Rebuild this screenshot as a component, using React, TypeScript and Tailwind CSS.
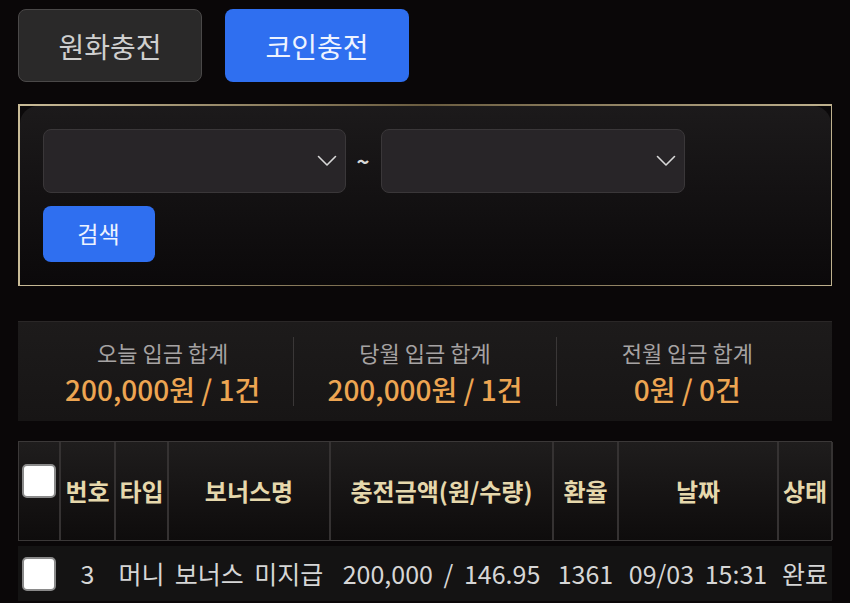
import React from 'react';

const FONT = { fontFamily: '"Noto Sans CJK KR", "Noto Sans", sans-serif' };

const Chevron: React.FC = () => (
  <svg width="20" height="12" viewBox="0 0 20 12" fill="none">
    <path d="M1.5 1.5L10 10L18.5 1.5" stroke="#d8d8d8" strokeWidth="1.6" strokeLinecap="round" strokeLinejoin="round" />
  </svg>
);

const Checkbox: React.FC = () => (
  <div className="h-[34px] w-[34px] rounded-[5px] border-2 border-[#8a8a8a] bg-white" />
);

const stats = [
  { label: '오늘 입금 합계', value: '200,000원 / 1건' },
  { label: '당월 입금 합계', value: '200,000원 / 1건' },
  { label: '전월 입금 합계', value: '0원 / 0건' },
];

const headers = ['번호', '타입', '보너스명', '충전금액(원/수량)', '환율', '날짜', '상태'];
const row = ['3', '머니', '보너스 미지급', '200,000 / 146.95', '1361', '09/03 15:31', '완료'];

const cols = 'grid grid-cols-[42px_55px_53px_162px_223px_65px_160px_54px]';

const App: React.FC = () => {
  return (
    <div className="h-[603px] w-[850px] overflow-hidden bg-[#0a0708]" style={FONT}>
      <div className="pl-[18px] pr-[18px] pt-[9px]">
        {/* tabs */}
        <div className="flex gap-[23px]">
          <button className="h-[73px] w-[184px] rounded-lg border border-[#4a4848] bg-[#2a2929] text-[28px] text-[#cfcfcf]">
            원화충전
          </button>
          <button className="h-[73px] w-[184px] rounded-lg bg-[#2f6ff0] text-[28px] text-[#eef3ff]">
            코인충전
          </button>
        </div>

        {/* search panel */}
        <div className="mt-[22px] bg-gradient-to-r from-[#c9bb97] via-[#6a5c40] to-[#bfb18e] p-[1.5px]">
          <div className="bg-[#0b090a]">
            <div className="rounded-t-[18px] bg-gradient-to-b from-[#1c1a1b] to-[#0b090a] px-[23px] pt-[23px] pb-[23px]">
              <div className="flex items-center">
                <div className="flex h-[64px] w-[303px] items-center justify-end rounded-lg border border-[#3a3739] bg-[#282528] pr-[8px]">
                  <Chevron />
                </div>
                <span className="w-[35px] text-center text-[22px] font-bold text-[#d8d8d8]">~</span>
                <div className="flex h-[64px] w-[304px] items-center justify-end rounded-lg border border-[#3a3739] bg-[#282528] pr-[8px]">
                  <Chevron />
                </div>
              </div>
              <button className="mt-[13px] h-[56px] w-[112px] rounded-lg bg-[#2f6ff0] text-[23px] text-[#eef3ff]">
                검색
              </button>
            </div>
          </div>
        </div>

        {/* stats */}
        <div className="mt-[35px] flex h-[100px] items-center border-t border-[#2a2727] bg-gradient-to-b from-[#1d1b1b] to-[#171515] px-[14px]">
          {stats.map((s, i) => (
            <div
              key={s.label}
              className={`flex flex-1 flex-col items-center justify-center ${i > 0 ? 'border-l border-[#3a3737]' : ''}`}
            >
              <span className="text-[22px] leading-[30px] text-[#a6a3a3]">{s.label}</span>
              <span className="mt-[5px] text-[28px] leading-[34px] font-medium text-[#eda552]">{s.value}</span>
            </div>
          ))}
        </div>

        {/* table */}
        <div className="mt-[20px]">
          <div className={`${cols} h-[100px] border-y border-l border-[#3b3838] bg-gradient-to-b from-[#1f1d1d] to-[#0e0c0c]`}>
            <div className="flex justify-center border-r-2 border-[#353232] pt-[22px]">
              <Checkbox />
            </div>
            {headers.map((h) => (
              <div
                key={h}
                className="flex items-center justify-center whitespace-nowrap border-r-2 border-[#353232] text-[24px] font-bold text-[#e6d8ac]"
              >
                {h}
              </div>
            ))}
          </div>
          <div className={`${cols} mt-[5px] h-[55px] bg-[#141313]`}>
            <div className="flex items-center justify-center">
              <Checkbox />
            </div>
            {row.map((c, i) => (
              <div
                key={i}
                className="flex items-center justify-center whitespace-nowrap text-[25px] text-[#d6d6d6] [word-spacing:5px]"
              >
                {c}
              </div>
            ))}
          </div>
        </div>
      </div>
    </div>
  );
};

export default App;
